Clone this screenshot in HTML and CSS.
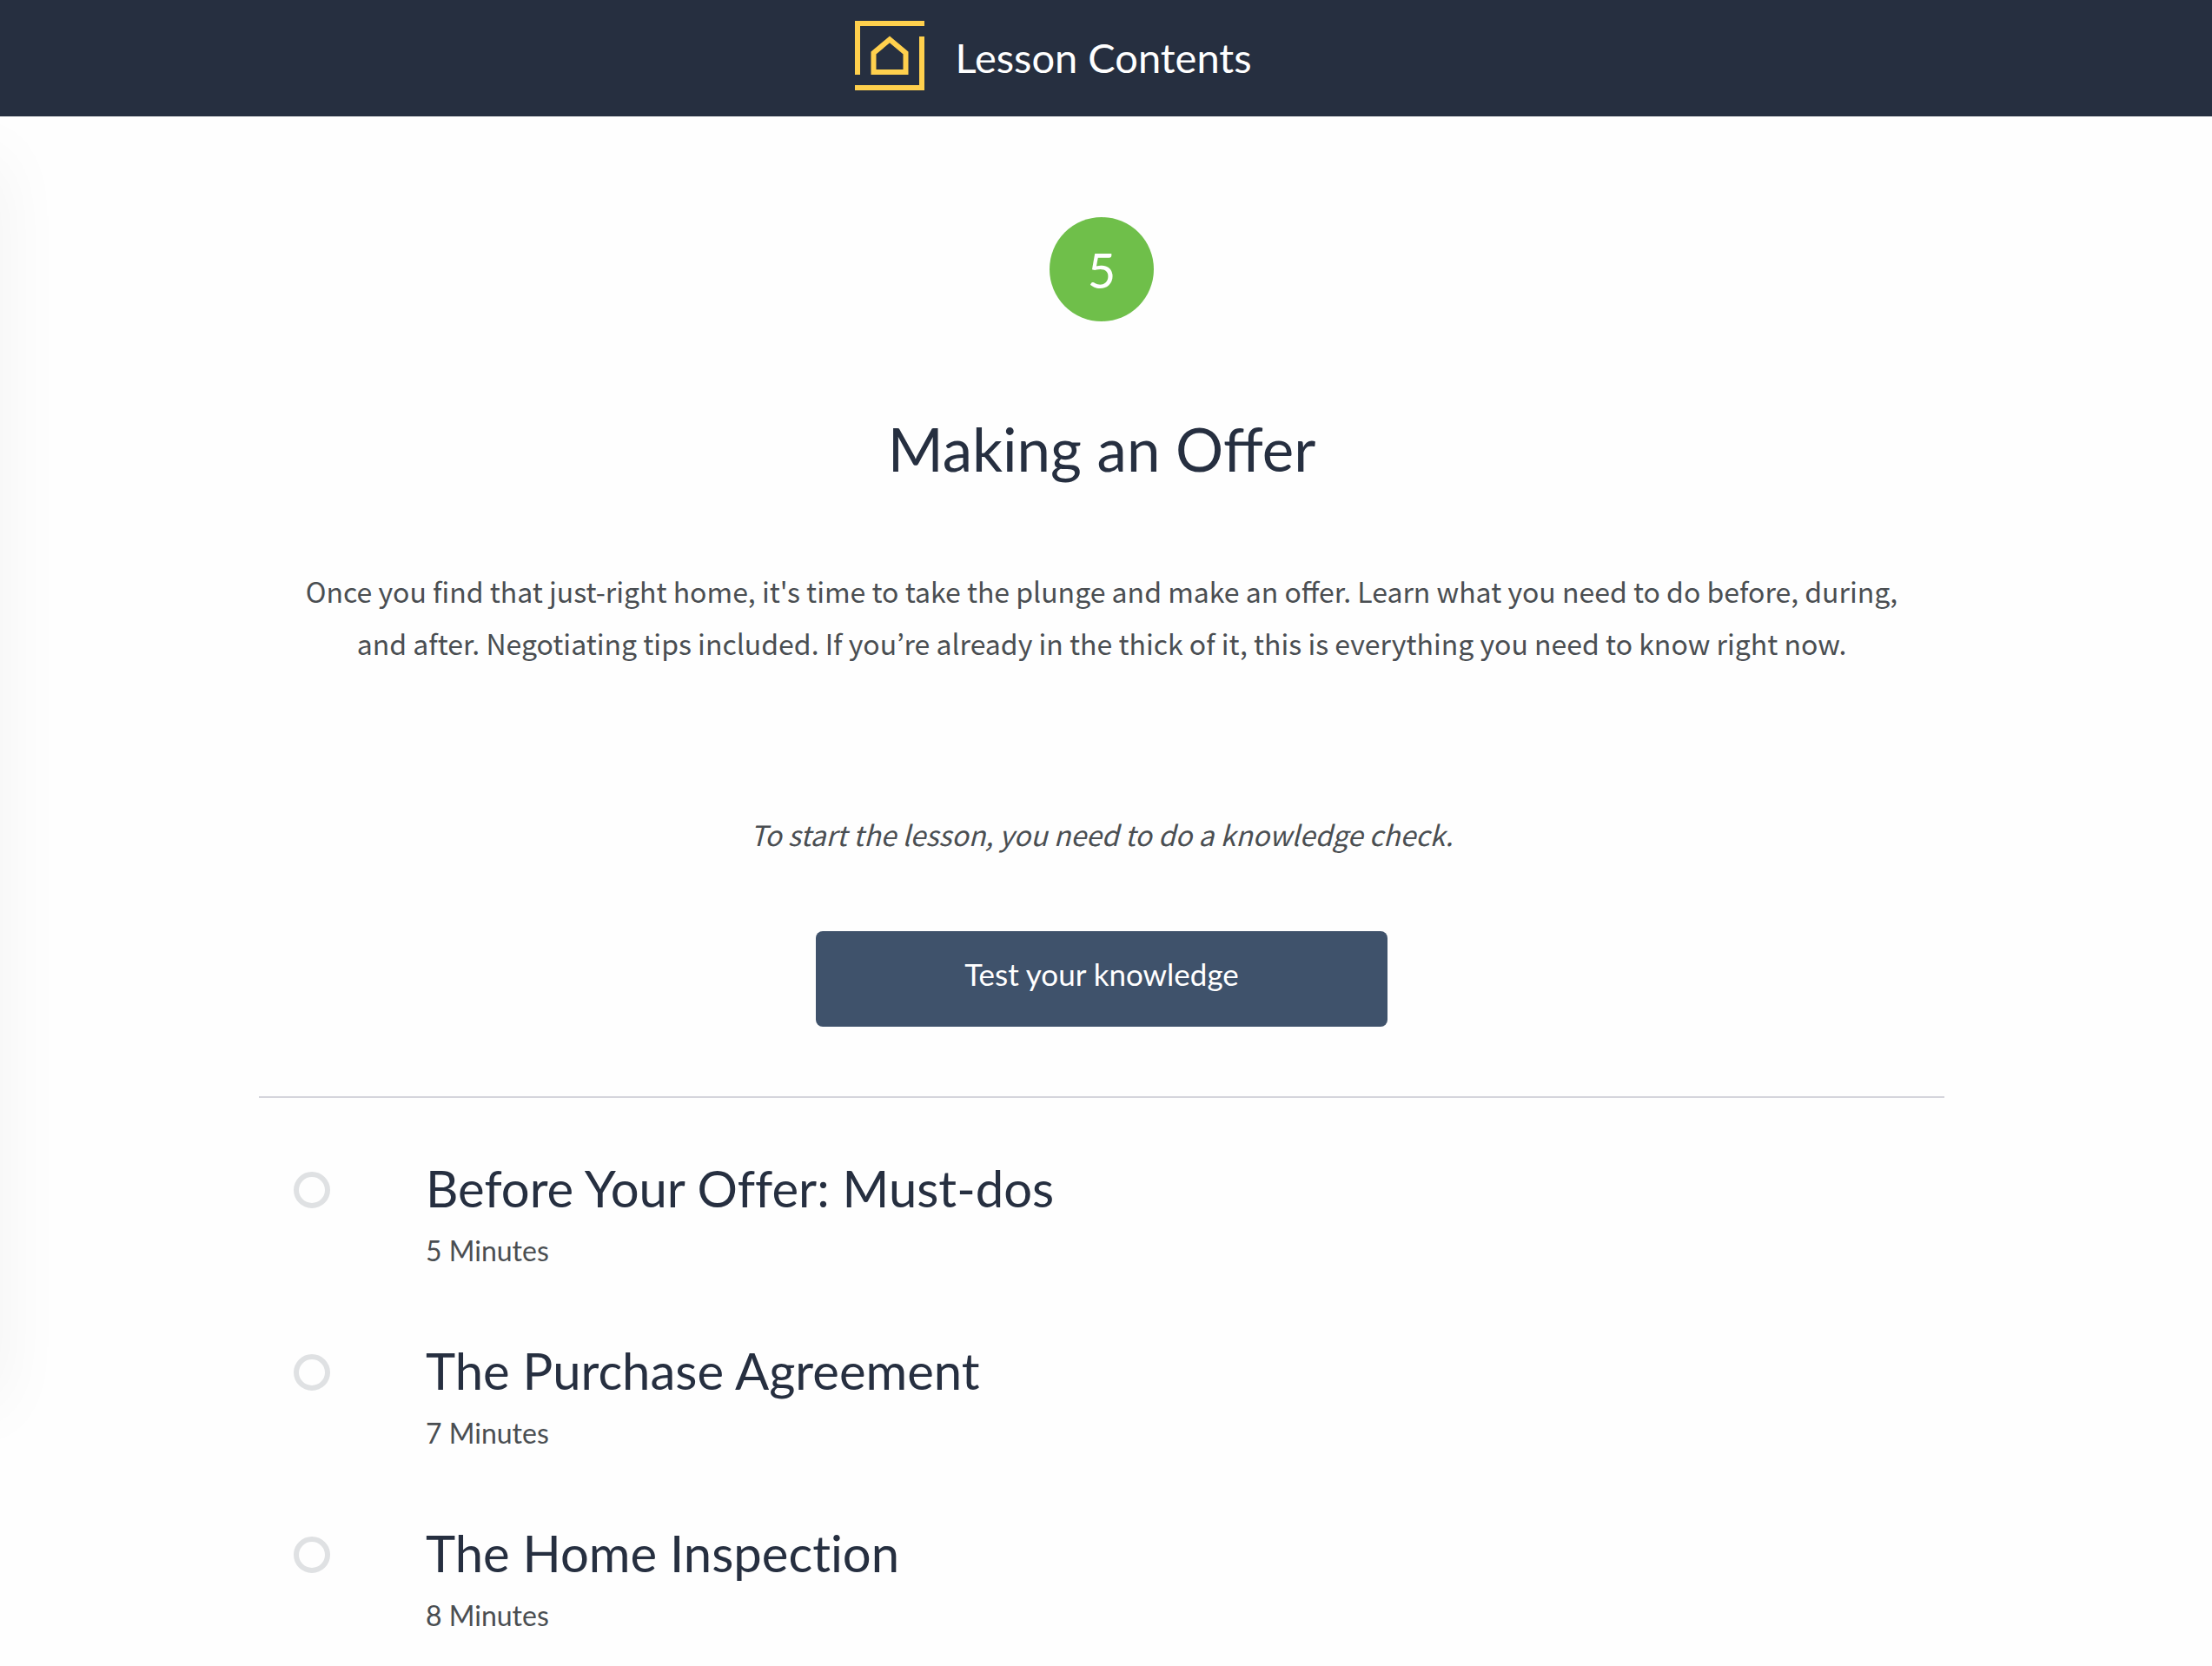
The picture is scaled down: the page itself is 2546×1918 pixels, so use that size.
FILE: index.html
```html
<!DOCTYPE html>
<html lang="en">
<head>
<meta charset="utf-8">
<meta name="viewport" content="width=device-width, initial-scale=1">
<title>Lesson Contents</title>
<link rel="stylesheet" href="styles.css">
</head>
<body>
<header class="topbar">
  <svg class="logo" viewBox="0 0 80 80" fill="none" stroke="currentColor" stroke-width="6" aria-hidden="true">
    <path d="M80 3H3V62M77 18V77H0"/>
    <path d="M21.500 59V37L40 21.500L58.500 37V59Z"/>
  </svg>
  <span class="topbar-title">Lesson Contents</span>
</header>
<main class="page">
  <div class="column">
    <section class="intro">
      <div class="badge">5</div>
      <h1 class="title">Making an Offer</h1>
      <p class="text summary">Once you find that just-right home, it's time to take the plunge and make an offer. Learn what you need to do before, during, and after. Negotiating tips included. If you’re already in the thick of it, this is everything you need to know right now.</p>
      <p class="text hint">To start the lesson, you need to do a knowledge check.</p>
      <button class="button" type="button">Test your knowledge</button>
    </section>
    <ul class="lessons">
      <li class="lesson">
        <span class="status"></span>
        <div>
          <h2 class="lesson-title"><a href="#before">Before Your Offer: Must-dos</a></h2>
          <p class="duration">5 Minutes</p>
        </div>
      </li>
      <li class="lesson">
        <span class="status"></span>
        <div>
          <h2 class="lesson-title"><a href="#agreement">The Purchase Agreement</a></h2>
          <p class="duration">7 Minutes</p>
        </div>
      </li>
      <li class="lesson">
        <span class="status"></span>
        <div>
          <h2 class="lesson-title"><a href="#inspection">The Home Inspection</a></h2>
          <p class="duration">8 Minutes</p>
        </div>
      </li>
    </ul>
  </div>
</main>
</body>
</html>
```
FILE: styles.css
```css
* { box-sizing: border-box; }

body {
  margin: 0;
  background: #fefefe;
  color: #262f40;
  font-family: Lato, "Liberation Sans", sans-serif;
}

h1, h2, p, ul { margin: 0; padding: 0; font-weight: 400; }

.topbar {
  display: flex;
  justify-content: center;
  gap: 36px;
  padding: 24px 122px 30px 0;
  background: #262f40;
  color: #fff;
}

.logo { width: 80px; height: 80px; color: #ffd04d; }

.topbar-title { font-size: 47px; line-height: 84px; margin-bottom: -4px; }

.page {
  position: relative;
  padding: 116px 10px 32px 0;
  overflow: hidden;
}

.page::before {
  content: "";
  position: absolute;
  top: 50px;
  bottom: 300px;
  left: -48px;
  width: 40px;
  box-shadow: 0 0 80px rgba(0, 0, 0, 0.08);
}

.column { width: 90%; max-width: 1940px; margin: 0 auto; }

.intro {
  display: flex;
  flex-direction: column;
  align-items: center;
  padding-bottom: 80px;
  border-bottom: 2px solid #d5d5dc;
  text-align: center;
}

.badge {
  width: 120px;
  height: 120px;
  border-radius: 50%;
  background: #6fbf4a;
  color: #fff;
  font-size: 56px;
  line-height: 122px;
}

.title { margin-top: 102px; font-size: 69px; line-height: 90px; }

.text {
  color: #4a4e52;
  font-family: "Noto Sans CJK KR", "Noto Sans", sans-serif;
  font-size: 32px;
  line-height: 60px;
}

.summary { margin-top: 88px; padding: 0 40px; }

.hint { margin-top: 160px; font-style: italic; }

.button {
  width: 658px;
  max-width: 100%;
  height: 110px;
  margin-top: 82px;
  padding: 0 0 12px;
  border: 0;
  border-radius: 8px;
  background: #3f526b;
  color: #fff;
  font: 35px/48px Lato, "Liberation Sans", sans-serif;
}

.lessons {
  display: flex;
  flex-direction: column;
  gap: 76px;
  padding: 66px 40px 0;
  list-style: none;
}

.lesson { display: flex; align-items: flex-start; gap: 110px; }

.status {
  flex: none;
  width: 42px;
  height: 42px;
  margin-top: 19px;
  border: 6px solid #dfe1e3;
  border-radius: 50%;
}

.lesson-title { font-size: 58px; line-height: 76px; font-variant-ligatures: none; }
.lesson-title a { color: inherit; text-decoration: none; }

.duration { margin-top: 10px; color: #4a4e52; font-size: 32px; line-height: 48px; }
```
